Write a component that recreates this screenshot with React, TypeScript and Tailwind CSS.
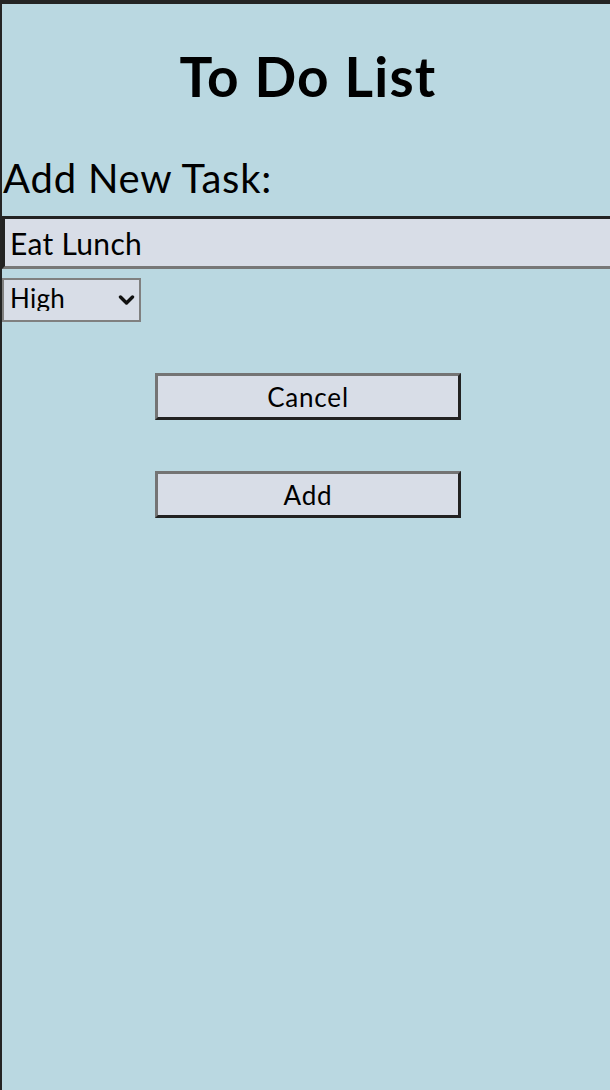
import React, { useState } from "react";

const App: React.FC = () => {
    const [task, setTask] = useState<string>("Eat Lunch");
    const [priority, setPriority] = useState<string>("High");

    return (
        <div className="min-h-screen w-full overflow-hidden bg-[#242424] pt-[4px] pl-[2px]">
            <div className="w-[612px] min-h-[1086px] bg-[#bad8e1] text-black font-['Lato','Open_Sans',sans-serif]">
                <h1 className="pt-[45px] text-center text-[55px] font-bold leading-none tracking-[1.2px]">
                    To Do List
                </h1>
                <div className="mt-[54px] text-[40px] leading-none tracking-[0.8px] pl-[1px]">
                    Add New Task:
                </div>
                <input
                    type="text"
                    value={task}
                    onChange={(e) => setTask(e.target.value)}
                    className="mt-[18px] block h-[53px] w-[620px] bg-[#d8dde7] pl-[5px] text-[30px] leading-none tracking-[0.3px] text-black outline-none border-[3px] border-t-[#222222] border-l-[#222222] border-b-[#777777] border-r-[#777777]"
                />
                <div className="relative mt-[9px] w-[139px]">
                    <select
                        value={priority}
                        onChange={(e) => setPriority(e.target.value)}
                        className="block h-[44px] w-[139px] appearance-none rounded-none border-2 border-[#808080] bg-[#d8dde7] pl-[6px] pb-[4px] text-[26px] leading-none tracking-[0.3px] text-black outline-none"
                    >
                        <option>High</option>
                        <option>Medium</option>
                        <option>Low</option>
                    </select>
                    <svg className="pointer-events-none absolute left-[116px] top-[17px] h-[10px] w-[17px]" viewBox="0 0 17 10" fill="none">
                        <polyline points="2.5,2 8.5,8 14.5,2" stroke="#111111" strokeWidth="3.4" strokeLinecap="round" strokeLinejoin="round" />
                    </svg>
                </div>
                <div className="mt-[51px] flex flex-col items-center gap-[51px]">
                    <button className="h-[47px] w-[306px] bg-[#d8dde7] text-[26px] leading-none tracking-[0.8px] text-black border-[3px] border-t-[#747474] border-l-[#747474] border-b-[#222222] border-r-[#222222]">
                        Cancel
                    </button>
                    <button className="h-[47px] w-[306px] bg-[#d8dde7] text-[26px] leading-none tracking-[0.8px] text-black border-[3px] border-t-[#747474] border-l-[#747474] border-b-[#222222] border-r-[#222222]">
                        Add
                    </button>
                </div>
            </div>
        </div>
    );
};

export default App;
